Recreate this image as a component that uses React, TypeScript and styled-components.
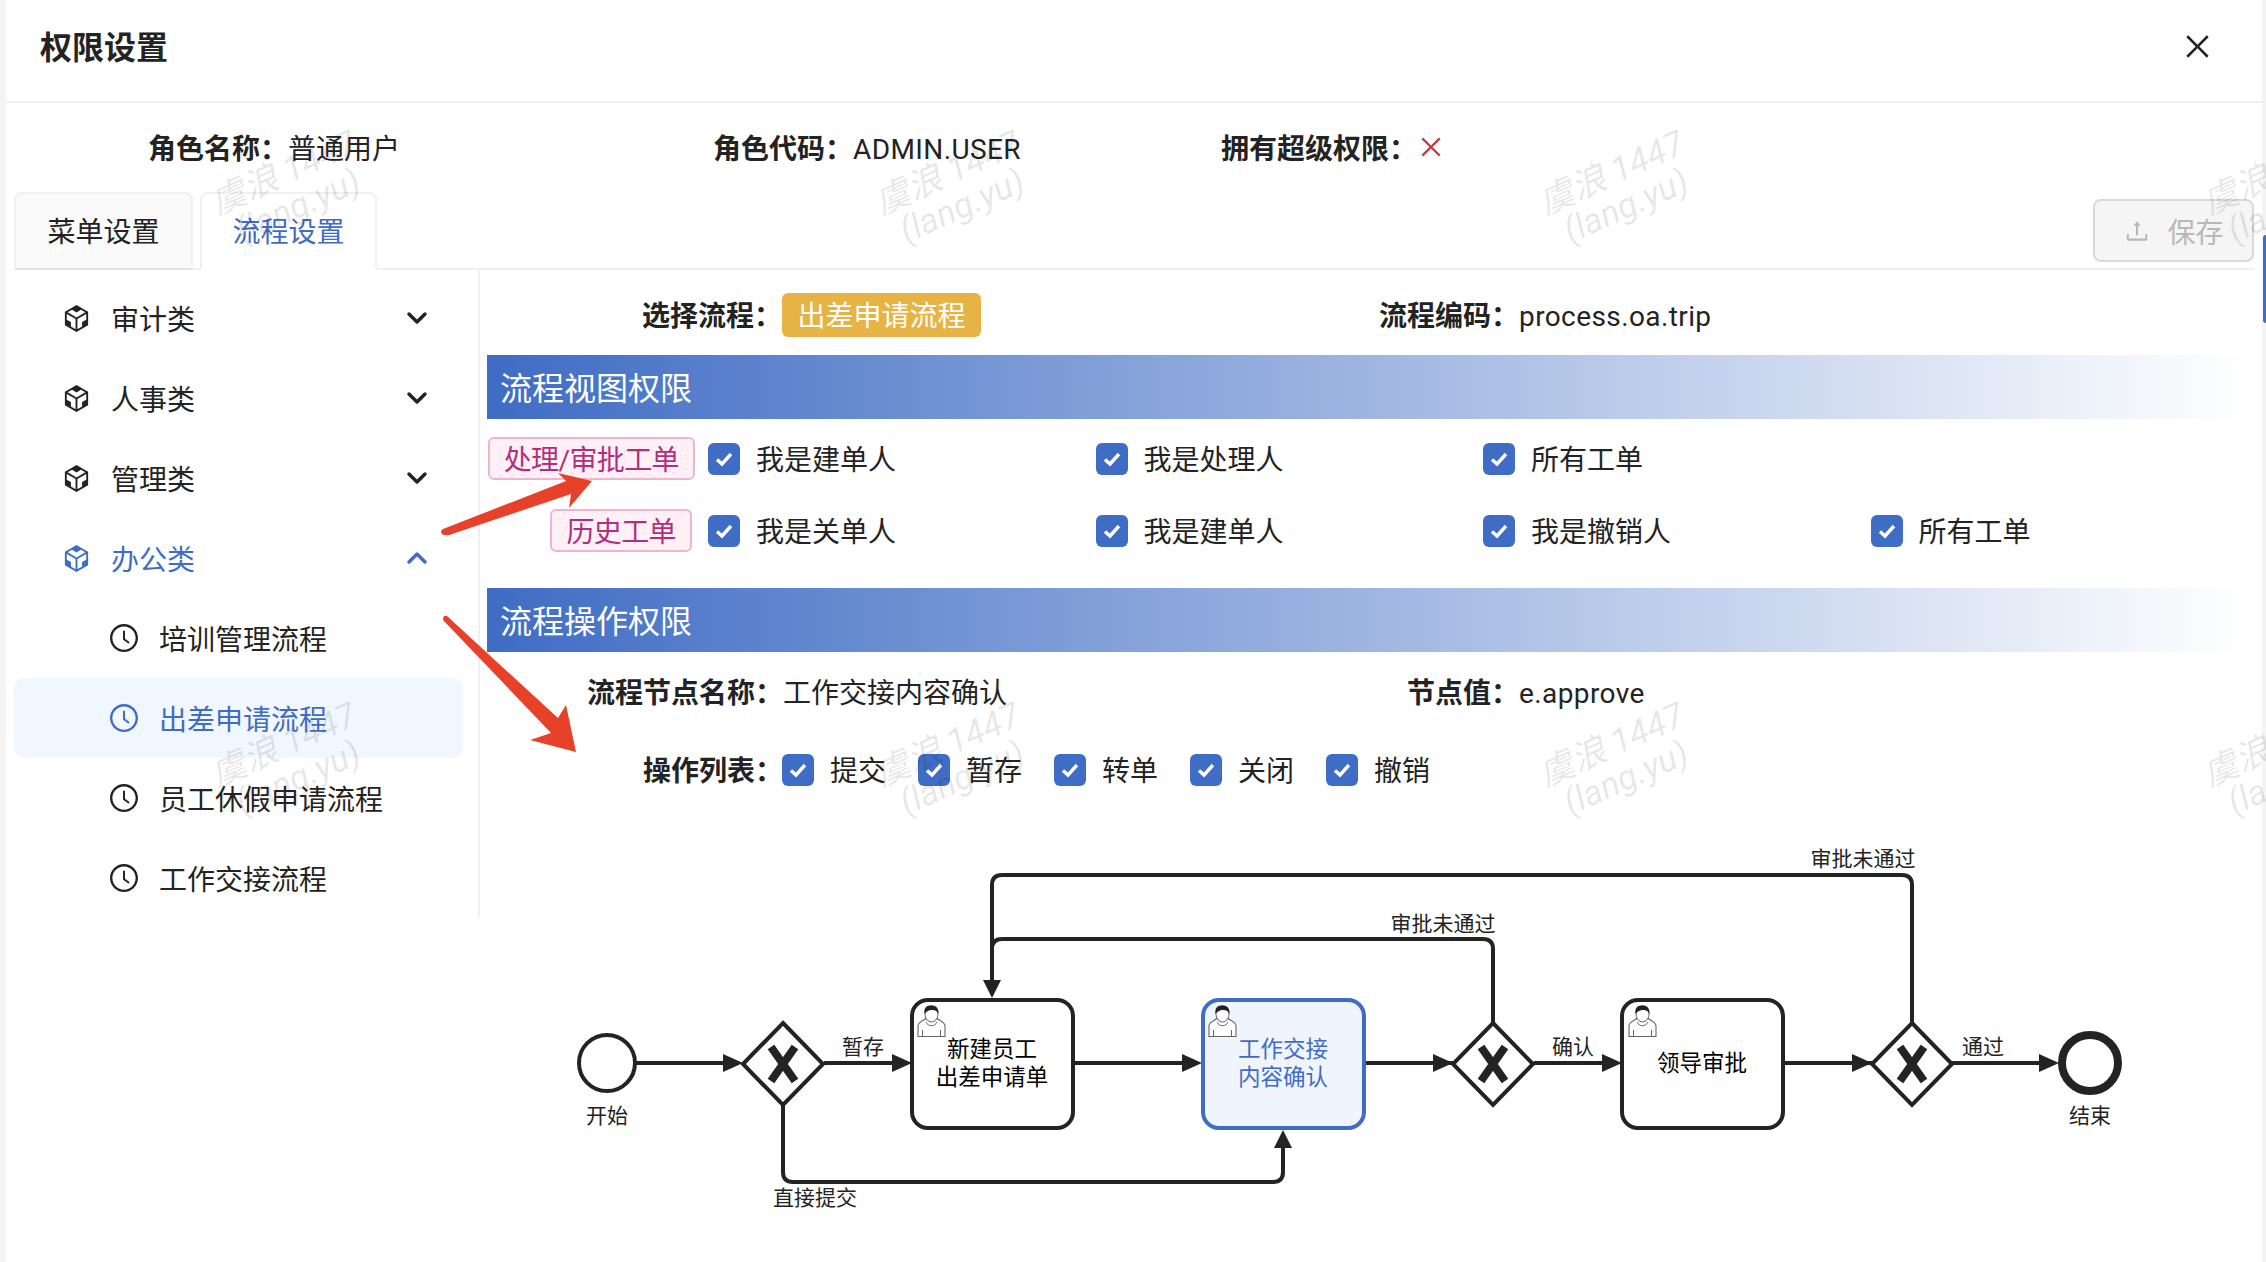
import React from 'react'
import styled, {createGlobalStyle} from 'styled-components'
import {AiOutlineClockCircle, AiOutlineClose, AiOutlineCodeSandbox, AiOutlineUpload} from 'react-icons/ai'
import {ChevronDown, ChevronUp} from 'lucide-react'

const BLUE = '#3f6cc4'
const INK = '#232323'

const GlobalStyle = createGlobalStyle`
  html, body {
    margin: 0;
    padding: 0;
    height: 100%;
    background: #f4f4f4;
  }
  * {
    box-sizing: border-box;
  }
  body {
    font-family: Roboto, "Noto Sans CJK SC", sans-serif;
    font-size: 28px;
    color: ${INK};
  }
`

const categories = ['审计类', '人事类', '管理类']
const flows = ['培训管理流程', '出差申请流程', '员工休假申请流程', '工作交接流程']
const viewRows = [
    {tag: '处理/审批工单', inset: 13, options: ['我是建单人', '我是处理人', '所有工单']},
    {tag: '历史工单', inset: 16, options: ['我是关单人', '我是建单人', '我是撤销人', '所有工单']},
]
const operations = ['提交', '暂存', '转单', '关闭', '撤销']

const CheckMark = () => (
    <CheckBox>
        <svg width="20" height="20" viewBox="0 0 20 20">
            <polyline points="3,10.5 8,15 17,5" fill="none" stroke="#fff" strokeWidth="3.4"/>
        </svg>
    </CheckBox>
)

const Person = ({x, y}: { x: number, y: number }) => (
    <g transform={`translate(${x} ${y})`}>
        <path d="M1 31.5V21C1 17 6 16 9.500 13C12 17 17 17 19.500 13C23 16 28 17 28 21V31.500Z" fill="#fff" stroke="#666"
              strokeWidth="1.100"/>
        <path d="M5.500 25V31.500M23.500 25V31.500M9 17C11 22 18 22 20 17" fill="none" stroke="#666" strokeWidth="1"/>
        <ellipse cx="14.500" cy="9" rx="6.500" ry="8" fill="#fff" stroke="#666" strokeWidth="1"/>
        <path d="M7.500 9C6.500 2 10 0.500 14.500 0.500C19 0.500 22 3 21.500 9C20 6 18 4.500 14 5C11 5.500 9 7 7.500 9Z" fill="#222"/>
    </g>
)

const Gateway = ({x}: { x: number }) => (
    <g>
        <polygon points={`${x},1023 ${x + 40},1064 ${x},1105 ${x - 40},1064`} fill="#fff" stroke={INK} strokeWidth="4"/>
        <path d={`M${x - 12} 1047L${x + 12} 1081M${x + 12} 1047L${x - 12} 1081`} stroke={INK} strokeWidth="8"/>
    </g>
)

const Arrow = ({x, y, dir}: { x: number, y: number, dir: 'right' | 'up' | 'down' }) => {
    const points = {
        right: `${x},${y} ${x - 20},${y - 9} ${x - 20},${y + 9}`,
        up: `${x},${y} ${x - 9},${y + 18} ${x + 9},${y + 18}`,
        down: `${x},${y} ${x - 9},${y - 18} ${x + 9},${y - 18}`,
    }[dir]
    return <polygon points={points} fill={INK}/>
}

const FlowDiagram = () => (
    <Diagram viewBox="487 830 1753 430">
        <g fill="none" stroke={INK} strokeWidth="4">
            <path d="M636 1063H730M824 1063H897M1075 1063H1187M1365 1063H1480M1534 1063H1607M1784 1063H1896M1952 1063H2045"/>
            <path d="M783 1105V1172Q783 1182 793 1182H1273Q1283 1182 1283 1172V1145"/>
            <path d="M1493 1023V949Q1493 939 1483 939H1002Q992 939 992 949V985"/>
            <path d="M1912 1023V885Q1912 875 1902 875H1002Q992 875 992 885V985"/>
        </g>
        <Arrow x={743} y={1063} dir="right"/>
        <Arrow x={912} y={1063} dir="right"/>
        <Arrow x={1202} y={1063} dir="right"/>
        <Arrow x={1453} y={1063} dir="right"/>
        <Arrow x={1622} y={1063} dir="right"/>
        <Arrow x={1872} y={1063} dir="right"/>
        <Arrow x={2059} y={1063} dir="right"/>
        <Arrow x={992} y={998} dir="down"/>
        <Arrow x={1283} y={1130} dir="up"/>

        <circle cx="607" cy="1063" r="28" fill="#fff" stroke={INK} strokeWidth="4"/>
        <circle cx="2090" cy="1063" r="28" fill="#fff" stroke={INK} strokeWidth="8"/>
        <Gateway x={783}/>
        <Gateway x={1493}/>
        <Gateway x={1912}/>

        <rect x="912" y="1000" width="161" height="128" rx="16" fill="#fff" stroke={INK} strokeWidth="4"/>
        <rect x="1203" y="1000" width="161" height="128" rx="16" fill="#eff4fd" stroke={BLUE} strokeWidth="4"/>
        <rect x="1622" y="1000" width="161" height="128" rx="16" fill="#fff" stroke={INK} strokeWidth="4"/>
        <Person x={917} y={1005}/>
        <Person x={1208} y={1005}/>
        <Person x={1628} y={1005}/>

        <TaskText x="992" y="1049">新建员工</TaskText>
        <TaskText x="992" y="1077">出差申请单</TaskText>
        <TaskText x="1283" y="1049" fill={BLUE}>工作交接</TaskText>
        <TaskText x="1283" y="1077" fill={BLUE}>内容确认</TaskText>
        <TaskText x="1702" y="1063">领导审批</TaskText>

        <EdgeLabel x="607" y="1116">开始</EdgeLabel>
        <EdgeLabel x="2090" y="1116">结束</EdgeLabel>
        <EdgeLabel x="863" y="1047">暂存</EdgeLabel>
        <EdgeLabel x="815" y="1198">直接提交</EdgeLabel>
        <EdgeLabel x="1443" y="924">审批未通过</EdgeLabel>
        <EdgeLabel x="1863" y="859">审批未通过</EdgeLabel>
        <EdgeLabel x="1573" y="1047">确认</EdgeLabel>
        <EdgeLabel x="1983" y="1047">通过</EdgeLabel>
    </Diagram>
)

const watermarks: number[][] = []
for (let row = 0; row < 2; row++) {
    for (let col = 0; col < 4; col++) {
        watermarks.push([291 + col * 664, 190 + row * 572])
    }
}

export default function App() {
    return (
        <>
            <GlobalStyle/>
            <Page>
                <Modal>
                    <Header>
                        <Title>权限设置</Title>
                        <AiOutlineClose size={33} color="#222"/>
                    </Header>
                    <InfoRow>
                        <InfoField $width={565}><b>角色名称：</b>普通用户</InfoField>
                        <InfoField $width={508}><b>角色代码：</b><Latin>ADMIN.USER</Latin></InfoField>
                        <InfoField>
                            <b>拥有超级权限：</b>
                            <SuperMark><AiOutlineClose size={28} color="#c8383a"/></SuperMark>
                        </InfoField>
                    </InfoRow>
                    <TabBar>
                        <Tab>菜单设置</Tab>
                        <Tab $active>流程设置</Tab>
                        <SaveButton><AiOutlineUpload size={28}/>保存</SaveButton>
                    </TabBar>
                    <Body>
                        <Sidebar>
                            {categories.map(name => (
                                <MenuItem key={name}>
                                    <AiOutlineCodeSandbox size={33}/>
                                    <span>{name}</span>
                                    <Chevron><ChevronDown size={32} strokeWidth={2.6}/></Chevron>
                                </MenuItem>
                            ))}
                            <MenuItem $open>
                                <AiOutlineCodeSandbox size={33}/>
                                <span>办公类</span>
                                <Chevron><ChevronUp size={32} strokeWidth={2.6}/></Chevron>
                            </MenuItem>
                            {flows.map((name, index) => (
                                <SubItem key={name} $selected={index === 1}>
                                    <AiOutlineClockCircle size={32}/>
                                    <span>{name}</span>
                                </SubItem>
                            ))}
                        </Sidebar>
                        <Main>
                            <SelectRow>
                                <SelectField><b>选择流程：</b><ProcessTag>出差申请流程</ProcessTag></SelectField>
                                <RaisedText><b>流程编码：</b><Latin>process.oa.trip</Latin></RaisedText>
                            </SelectRow>
                            <SectionBar>流程视图权限</SectionBar>
                            <ViewRows>
                                {viewRows.map(row => (
                                    <ViewRow key={row.tag}>
                                        <TagCell $inset={row.inset}><PinkTag>{row.tag}</PinkTag></TagCell>
                                        {row.options.map(option => (
                                            <Option key={option}><CheckMark/>{option}</Option>
                                        ))}
                                    </ViewRow>
                                ))}
                            </ViewRows>
                            <SectionBar>流程操作权限</SectionBar>
                            <NodeRow>
                                <NodeField><b>流程节点名称：</b>工作交接内容确认</NodeField>
                                <span><b>节点值：</b><Latin>e.approve</Latin></span>
                            </NodeRow>
                            <OperationRow>
                                <OperationLabel>操作列表：</OperationLabel>
                                {operations.map(name => (
                                    <Operation key={name}><CheckMark/>{name}</Operation>
                                ))}
                            </OperationRow>
                            <FlowDiagram/>
                        </Main>
                    </Body>
                </Modal>
                <EdgeHandle/>
                <Annotations viewBox="0 0 2266 1262">
                    <path d="M443 529L566 481L558 473L592 481L569 508L571 494L449 535Q442 536 441 532Q441 530 443 529Z"/>
                    <path d="M447 616L558 718L566 705L576 752L530 740L551 733L443 620Q443 615 447 616Z"/>
                </Annotations>
                {watermarks.map(([x, y]) => (
                    <Watermark key={`${x}-${y}`} style={{left: x, top: y}}>
                        虞浪 1447<br/>(lang.yu)
                    </Watermark>
                ))}
            </Page>
        </>
    )
}

const Page = styled.div`
  position: relative;
  width: 2266px;
  height: 1262px;
  overflow: hidden;
  padding: 0 4px 0 6px;
  background: #f4f4f4;

  b {
    font-weight: 700;
  }
`

const Modal = styled.div`
  height: 100%;
  background: #fff;
`

const Header = styled.div`
  display: flex;
  align-items: center;
  justify-content: space-between;
  height: 103px;
  padding: 0 48px 12px 34px;
  border-bottom: 2px solid #f0f0f0;

  svg {
    margin-top: 3px;
  }
`

const Title = styled.div`
  font-size: 32px;
  font-weight: 700;
`

const Latin = styled.span`
  letter-spacing: 0.4px;
`

const InfoRow = styled.div`
  display: flex;
  align-items: center;
  height: 89px;
  padding: 0 0 2px 142px;
`

const InfoField = styled.div<{ $width?: number }>`
  display: flex;
  align-items: baseline;
  width: ${p => (p.$width ? `${p.$width}px` : 'auto')};
`

const SuperMark = styled.span`
  display: flex;
  align-self: center;
`

const TabBar = styled.div`
  display: flex;
  gap: 7px;
  height: 78px;
  margin: 0 8px;
  border-bottom: 2px solid #f0f0f0;
`

const Tab = styled.div<{ $active?: boolean }>`
  display: flex;
  align-items: center;
  justify-content: center;
  width: ${p => (p.$active ? '177px' : '179px')};
  height: 78px;
  padding-bottom: 2px;
  border: 2px solid #f0f0f0;
  border-radius: 8px 8px 0 0;
  background: ${p => (p.$active ? '#fff' : '#fafafa')};
  border-bottom-color: ${p => (p.$active ? '#fff' : '#e6e6e6')};
  color: ${p => (p.$active ? BLUE : INK)};
`

const SaveButton = styled.div`
  display: flex;
  align-items: center;
  justify-content: center;
  gap: 16px;
  width: 161px;
  height: 63px;
  margin: 7px 0 0 auto;
  border: 2px solid #d9d9d9;
  border-radius: 8px;
  background: #f5f5f5;
  color: #b8b8b8;
`

const Body = styled.div`
  display: flex;
  margin-left: 8px;
`

const Sidebar = styled.div`
  flex: none;
  width: 466px;
  height: 648px;
  padding: 8px 15px 0 0;
  border-right: 2px solid #f0f0f0;
`

const MenuItem = styled.div<{ $open?: boolean }>`
  display: flex;
  align-items: center;
  gap: 18px;
  height: 80px;
  padding: 0 30px 0 46px;
  color: ${p => (p.$open ? BLUE : INK)};
`

const Chevron = styled.span`
  display: flex;
  margin-left: auto;
`

const SubItem = styled.div<{ $selected?: boolean }>`
  display: flex;
  align-items: center;
  gap: 19px;
  height: 80px;
  padding-left: 94px;
  border-radius: 10px;
  background: ${p => (p.$selected ? '#f0f7ff' : 'transparent')};
  color: ${p => (p.$selected ? BLUE : INK)};
`

const Main = styled.div`
  flex: 1;
  min-width: 0;
  padding: 0 14px 0 7px;
`

const SelectRow = styled.div`
  display: flex;
  align-items: center;
  height: 85px;
  padding: 5px 0 0 155px;
`

const SelectField = styled.div`
  display: flex;
  align-items: center;
  width: 737px;

  b {
    margin-top: -2px;
  }
`

const RaisedText = styled.span`
  margin-top: -3px;
`

const ProcessTag = styled.span`
  display: flex;
  align-items: center;
  justify-content: center;
  width: 199px;
  height: 44px;
  padding-bottom: 2px;
  border-radius: 6px;
  background: #e6b445;
  color: #fff;
`

const SectionBar = styled.div`
  display: flex;
  align-items: center;
  height: 64px;
  padding: 0 0 2px 13px;
  background: linear-gradient(90deg, ${BLUE}, #fff);
  color: #fff;
  font-size: 32px;
`

const ViewRows = styled.div`
  display: flex;
  flex-direction: column;
  gap: 29px;
  padding: 18px 0 36px;
`

const ViewRow = styled.div`
  display: grid;
  grid-template-columns: 221px repeat(4, 387.5px);
  align-items: center;
  height: 43px;
`

const TagCell = styled.div<{ $inset: number }>`
  display: flex;
  justify-content: flex-end;
  padding-right: ${p => p.$inset}px;
`

const PinkTag = styled.span`
  display: flex;
  align-items: center;
  height: 43px;
  padding: 0 14px 2px;
  border: 2px solid #eeb5d3;
  border-radius: 6px;
  background: #fff0f6;
  color: #b0307f;
  letter-spacing: -0.6px;
  white-space: nowrap;
`

const Option = styled.label`
  display: flex;
  align-items: center;
  gap: 16px;
  padding-bottom: 2px;
`

const CheckBox = styled.span`
  display: flex;
  align-items: center;
  justify-content: center;
  flex: none;
  width: 32px;
  height: 32px;
  margin-bottom: -2px;
  border-radius: 6px;
  background: ${BLUE};
`

const NodeRow = styled.div`
  display: flex;
  align-items: center;
  height: 38px;
  margin-top: 20px;
  padding-left: 100px;
`

const NodeField = styled.div`
  width: 820px;
`

const OperationRow = styled.div`
  display: flex;
  align-items: center;
  height: 40px;
  margin-top: 39px;
  padding-left: 156px;
`

const OperationLabel = styled.b`
  flex: none;
  width: 139px;
  white-space: nowrap;
`

const Operation = styled.label`
  display: flex;
  align-items: center;
  gap: 16px;
  flex: none;
  width: 136px;
`

const Diagram = styled.svg`
  display: block;
  width: 1753px;
  height: 430px;
  margin-top: 41px;
`

const TaskText = styled.text`
  font-size: 22.5px;
  text-anchor: middle;
  dominant-baseline: central;
`

const EdgeLabel = styled.text`
  font-size: 21px;
  text-anchor: middle;
  dominant-baseline: central;
  fill: ${INK};
`

const EdgeHandle = styled.div`
  position: absolute;
  top: 235px;
  right: 0;
  width: 3px;
  height: 88px;
  border-radius: 3px 0 0 3px;
  background: ${BLUE};
`

const Annotations = styled.svg`
  position: absolute;
  top: 0;
  left: 0;
  width: 2266px;
  height: 1262px;
  fill: #e8412a;
  pointer-events: none;
`

const Watermark = styled.div`
  position: absolute;
  width: 260px;
  margin: -36px 0 0 -130px;
  transform: rotate(-24deg);
  color: rgba(0, 0, 0, 0.1);
  font-size: 35px;
  font-style: italic;
  line-height: 36px;
  text-align: center;
  white-space: nowrap;
  pointer-events: none;
`
